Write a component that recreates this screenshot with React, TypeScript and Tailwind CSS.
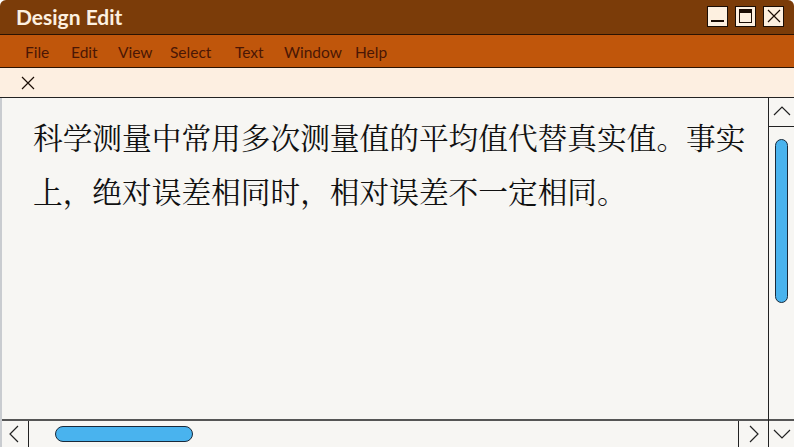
const menuItems = [
  { label: 'File', left: 25 },
  { label: 'Edit', left: 71 },
  { label: 'View', left: 118 },
  { label: 'Select', left: 170 },
  { label: 'Text', left: 235 },
  { label: 'Window', left: 284 },
  { label: 'Help', left: 355 },
]

function Cross({ size }: { size: number }) {
  return (
    <svg viewBox="0 0 14 14" width={size} height={size} fill="none" stroke="#1a0d05" strokeWidth="1.2">
      <path d="M1 1 L13 13 M13 1 L1 13" />
    </svg>
  )
}

function Chevron({ dir }: { dir: 'up' | 'down' | 'left' | 'right' }) {
  const d = {
    up: 'M2 11 L10 3 L18 11',
    down: 'M2 4 L10 12 L18 4',
    left: 'M11 1 L3 9 L11 17',
    right: 'M4 1 L12 9 L4 17',
  }[dir]
  const box = dir === 'up' || dir === 'down' ? '0 0 20 16' : '0 0 16 18'
  const size = dir === 'up' || dir === 'down' ? 'h-[16px] w-[20px]' : 'h-[18px] w-[16px]'
  return (
    <svg viewBox={box} className={size} fill="none" stroke="#222" strokeWidth="1.2">
      <path d={d} />
    </svg>
  )
}

function WinButton({ kind }: { kind: 'min' | 'max' | 'close' }) {
  return (
    <div className="flex h-[21px] w-[21px] items-center justify-center border border-[#1a0d05] bg-[#fdf0e0]">
      {kind === 'min' && <div className="mt-[10px] h-[2px] w-[13px] bg-[#1a0d05]" />}
      {kind === 'max' && (
        <div className="h-[14px] w-[13px] border border-[#1a0d05] border-t-[4px]" />
      )}
      {kind === 'close' && <Cross size={14} />}
    </div>
  )
}

export default function App() {
  return (
    <div className="flex h-[447px] w-[794px] flex-col overflow-hidden rounded-t-[6px] bg-[#f7f6f3] font-['Lato',sans-serif]">
      {/* Title bar */}
      <div className="flex h-[35px] shrink-0 items-center justify-between border-b border-[#2a1303] bg-[#7b3c09] pl-[16px] pr-[10px]">
        <span className="text-[21px] font-bold text-[#fdf0e0]">Design Edit</span>
        <div className="flex gap-[7px] pb-[2px]">
          <WinButton kind="min" />
          <WinButton kind="max" />
          <WinButton kind="close" />
        </div>
      </div>

      {/* Menu bar */}
      <div className="relative h-[33px] shrink-0 border-b border-[#2a1303] bg-[#c0560b]">
        {menuItems.map((m) => (
          <span
            key={m.label}
            className="absolute top-[6px] text-[15.5px] text-[#4a1605]"
            style={{ left: m.left }}
          >
            {m.label}
          </span>
        ))}
      </div>

      {/* Tab strip */}
      <div className="flex h-[30px] shrink-0 items-center border-b border-[#222] bg-[#fdefe1] pl-[21px]">
        <Cross size={14} />
      </div>

      {/* Body */}
      <div className="flex min-h-0 flex-1">
        <div className="flex min-w-0 flex-1 flex-col border-l-2 border-[#c9ccd0]">
          <div className="flex-1 pl-[31px] pr-[20px] pt-[11px]">
            <p className="font-['Noto_Serif_CJK_SC','Noto_Sans_CJK_SC',serif] text-[29.7px] leading-[54px] text-[#111]">
              科学测量中常用多次测量值的平均值代替真实值。事实上，绝对误差相同时，相对误差不一定相同。
            </p>
          </div>
          <div className="flex h-[28px] shrink-0 border-t-2 border-[#555]">
            <div className="flex w-[27px] items-center justify-center border-r border-[#222]">
              <Chevron dir="left" />
            </div>
            <div className="flex flex-1 items-center pl-[26px]">
              <div className="h-[16px] w-[138px] rounded-full border border-[#1a2a3a] bg-[#49b3ee]" />
            </div>
            <div className="flex w-[30px] items-center justify-center border-l border-[#222]">
              <Chevron dir="right" />
            </div>
          </div>
        </div>

        <div className="flex w-[26px] shrink-0 flex-col border-l border-[#222]">
          <div className="flex h-[29px] items-center justify-center border-b border-[#222]">
            <Chevron dir="up" />
          </div>
          <div className="flex-1 pl-[6px] pt-[12px]">
            <div className="h-[164px] w-[13px] rounded-full border border-[#1a2a3a] bg-[#49b3ee]" />
          </div>
          <div className="flex h-[28px] items-center justify-center border-t-2 border-[#555]">
            <Chevron dir="down" />
          </div>
        </div>
      </div>
    </div>
  )
}
